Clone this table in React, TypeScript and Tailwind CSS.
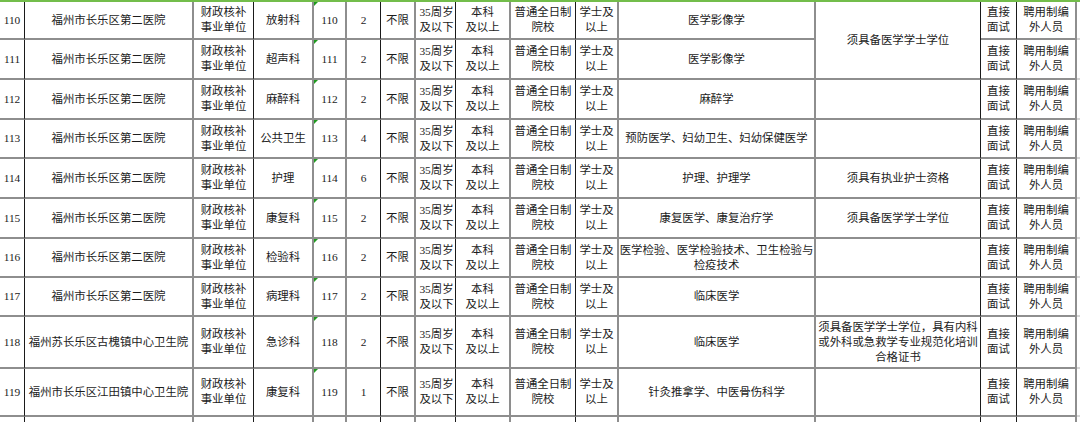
import React from "react";

type Row = {
  n: string;
  name: string;
  dept: string;
  count: string;
  major: string[];
  cond?: string[] | null; // null = covered by span
  span?: boolean;
};

const rows: Row[] = [
  { n: "110", name: "福州市长乐区第二医院", dept: "放射科", count: "2", major: ["医学影像学"], cond: ["须具备医学学士学位"], span: true },
  { n: "111", name: "福州市长乐区第二医院", dept: "超声科", count: "2", major: ["医学影像学"], cond: null },
  { n: "112", name: "福州市长乐区第二医院", dept: "麻醉科", count: "2", major: ["麻醉学"], cond: [] },
  { n: "113", name: "福州市长乐区第二医院", dept: "公共卫生", count: "4", major: ["预防医学、妇幼卫生、妇幼保健医学"], cond: [] },
  { n: "114", name: "福州市长乐区第二医院", dept: "护理", count: "6", major: ["护理、护理学"], cond: ["须具有执业护士资格"] },
  { n: "115", name: "福州市长乐区第二医院", dept: "康复科", count: "2", major: ["康复医学、康复治疗学"], cond: ["须具备医学学士学位"] },
  { n: "116", name: "福州市长乐区第二医院", dept: "检验科", count: "2", major: ["医学检验、医学检验技术、卫生检验与", "检疫技术"], cond: [] },
  { n: "117", name: "福州市长乐区第二医院", dept: "病理科", count: "2", major: ["临床医学"], cond: [] },
  { n: "118", name: "福州苏长乐区古槐镇中心卫生院", dept: "急诊科", count: "2", major: ["临床医学"], cond: ["须具备医学学士学位，具有内科", "或外科或急救学专业规范化培训", "合格证书"] },
  { n: "119", name: "福州市长乐区江田镇中心卫生院", dept: "康复科", count: "1", major: ["针灸推拿学、中医骨伤科学"], cond: [] },
];

function Cell({
  children,
  r,
  extra = "",
  bottom = true,
}: {
  children?: React.ReactNode;
  r: "b" | "g" | "n";
  extra?: string;
  bottom?: boolean;
}) {
  const rc =
    r === "b"
      ? "border-r border-r-[#1a1a1a]"
      : r === "g"
      ? "border-r-2 border-r-[#8e8e8e]"
      : "";
  const bc = bottom ? "border-b-2 border-b-[#8e8e8e]" : "";
  return (
    <div className={`relative flex items-center justify-center text-center leading-[15px] ${rc} ${bc} ${extra}`}>
      {children}
    </div>
  );
}

function Lines({ l }: { l: string[] }) {
  return (
    <div>
      {l.map((t, i) => (
        <div key={i}>{t}</div>
      ))}
    </div>
  );
}

export default function App() {
  return (
    <div
      className="w-[1080px] h-[422px] overflow-hidden bg-white text-[#1c1c1c] text-[11.4px]"
      style={{ fontFamily: '"Liberation Serif", "Noto Sans CJK SC", serif' }}
    >
      <div className="h-[2px] bg-[#73bd4b]" />
      <div className="grid grid-cols-[25px_169px_60px_60px_33px_34px_35px_40px_55px_65px_43px_197px_165px_36px_60px_3px] grid-rows-[38px_40px_40px_39px_40px_40px_39px_39px_52px_48px_5px]">
        {rows.map((row) => (
          <React.Fragment key={row.n}>
            <Cell r="b">{row.n}</Cell>
            <Cell r="g">{row.name}</Cell>
            <Cell r="b">
              <Lines l={["财政核补", "事业单位"]} />
            </Cell>
            <Cell r="g">{row.dept}</Cell>
            <Cell r="g">
              <span className="absolute top-0 left-0 w-0 h-0 border-t-[4px] border-r-[4px] border-t-[#1f9a1f] border-r-transparent" />
              {row.n}
            </Cell>
            <Cell r="b">{row.count}</Cell>
            <Cell r="g">不限</Cell>
            <Cell r="b" extra="pl-[2px]">
              <Lines l={["35周岁", "及以下"]} />
            </Cell>
            <Cell r="g">
              <Lines l={["本科", "及以上"]} />
            </Cell>
            <Cell r="b">
              <Lines l={["普通全日制", "院校"]} />
            </Cell>
            <Cell r="g">
              <Lines l={["学士及", "以上"]} />
            </Cell>
            <Cell r="g">
              <Lines l={row.major} />
            </Cell>
            {row.cond === null ? null : (
              <Cell r="b" extra={row.span ? "row-span-2" : ""}>
                <Lines l={row.cond ?? []} />
              </Cell>
            )}
            <Cell r="b">
              <Lines l={["直接", "面试"]} />
            </Cell>
            <Cell r="g">
              <Lines l={["聘用制编", "外人员"]} />
            </Cell>
            <Cell r="n" extra="border-b-[#d6d6d6]" />
          </React.Fragment>
        ))}
        {["b", "g", "b", "g", "g", "b", "g", "b", "g", "b", "g", "g", "b", "b", "g", "n"].map((r, i) => (
          <Cell key={"t" + i} r={r as "b" | "g" | "n"} bottom={false} />
        ))}
      </div>
    </div>
  );
}
